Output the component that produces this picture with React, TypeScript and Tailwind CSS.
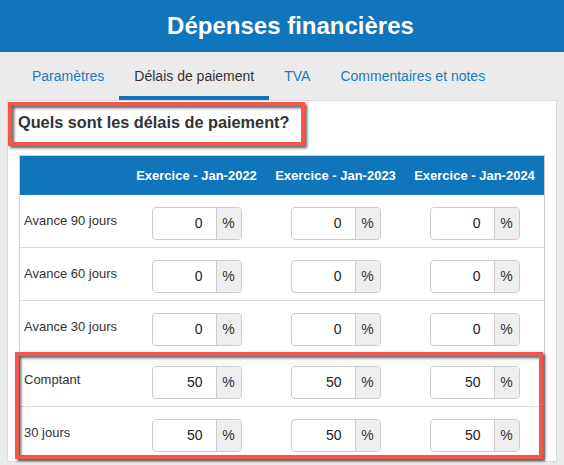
const font = { fontFamily: '"Liberation Sans", Arial, sans-serif' };

const years = ["Jan-2022", "Jan-2023", "Jan-2024"];

const rows = [
  { label: "Avance 90 jours", value: "0" },
  { label: "Avance 60 jours", value: "0" },
  { label: "Avance 30 jours", value: "0" },
  { label: "Comptant", value: "50" },
  { label: "30 jours", value: "50" },
];

const tabs = [
  { label: "Paramètres", active: false },
  { label: "Délais de paiement", active: true },
  { label: "TVA", active: false },
  { label: "Commentaires et notes", active: false },
];

function PercentInput({ value }: { value: string }) {
  return (
    <div className="mt-[4px] flex h-[33px] w-[90px] overflow-hidden rounded-[4px] border border-[#cccccc] bg-white">
      <div className="flex flex-1 items-center justify-end pr-[13px] text-[14px] text-[#222]">{value}</div>
      <div className="flex w-[25px] items-center justify-center border-l border-[#cccccc] bg-[#eeeeee] text-[14px] text-[#333]">%</div>
    </div>
  );
}

export default function App() {
  return (
    <div className="relative h-[465px] w-[564px] overflow-hidden bg-[#ebebeb]" style={font}>
      {/* en-tête */}
      <div className="flex h-[52px] items-center justify-center bg-[#1075bb] pl-[17px] text-[24px] leading-[32px] font-bold text-white">
        Dépenses financières
      </div>

      {/* onglets */}
      <div className="flex h-[48px] pl-[17px]">
        {tabs.map((t) => (
          <div
            key={t.label}
            className={`box-border h-[48px] border-b-4 px-[15px] pt-[14px] text-[14px] leading-[20px] ${
              t.active ? "border-[#1075bb] text-[#333]" : "border-transparent text-[#1a7cc1]"
            }`}
          >
            {t.label}
          </div>
        ))}
      </div>

      {/* panneau */}
      <div className="ml-[7px] w-[550px] border border-[#dcdcdc] bg-white pt-[11px]">
        <h2 className="pl-[10px] text-[16.3px] leading-[20px] font-bold text-[#333]">Quels sont les délais de paiement?</h2>

        <div className="mt-[23px] ml-[11px] w-[526px] border border-[#cccccc]">
          <div className="grid h-[39px] grid-cols-[107px_1fr_1fr_1fr] items-center bg-[#1075bb] text-[13px] font-bold text-white">
            <div />
            {years.map((y) => (
              <div key={y} className="text-center">Exercice - {y}</div>
            ))}
          </div>
          {rows.map((r) => (
            <div key={r.label} className="grid h-[53px] grid-cols-[107px_1fr_1fr_1fr] items-center border-b border-[#dddddd]">
              <div className="pl-[4px] text-[13px] text-[#333]">{r.label}</div>
              {years.map((y) => (
                <div key={y} className="flex justify-center">
                  <PercentInput value={r.value} />
                </div>
              ))}
            </div>
          ))}
        </div>
      </div>

      {/* cadres d'annotation */}
      <div className="pointer-events-none absolute top-[102px] left-[8px] h-[44px] w-[297px] border-4 border-[#f4564a] drop-shadow-[2px_2px_1.5px_rgba(0,0,0,0.65)]" />
      <div className="pointer-events-none absolute top-[352px] left-[15px] h-[107px] w-[528px] border-4 border-[#f4564a] drop-shadow-[2px_2px_1.5px_rgba(0,0,0,0.65)]" />
    </div>
  );
}
